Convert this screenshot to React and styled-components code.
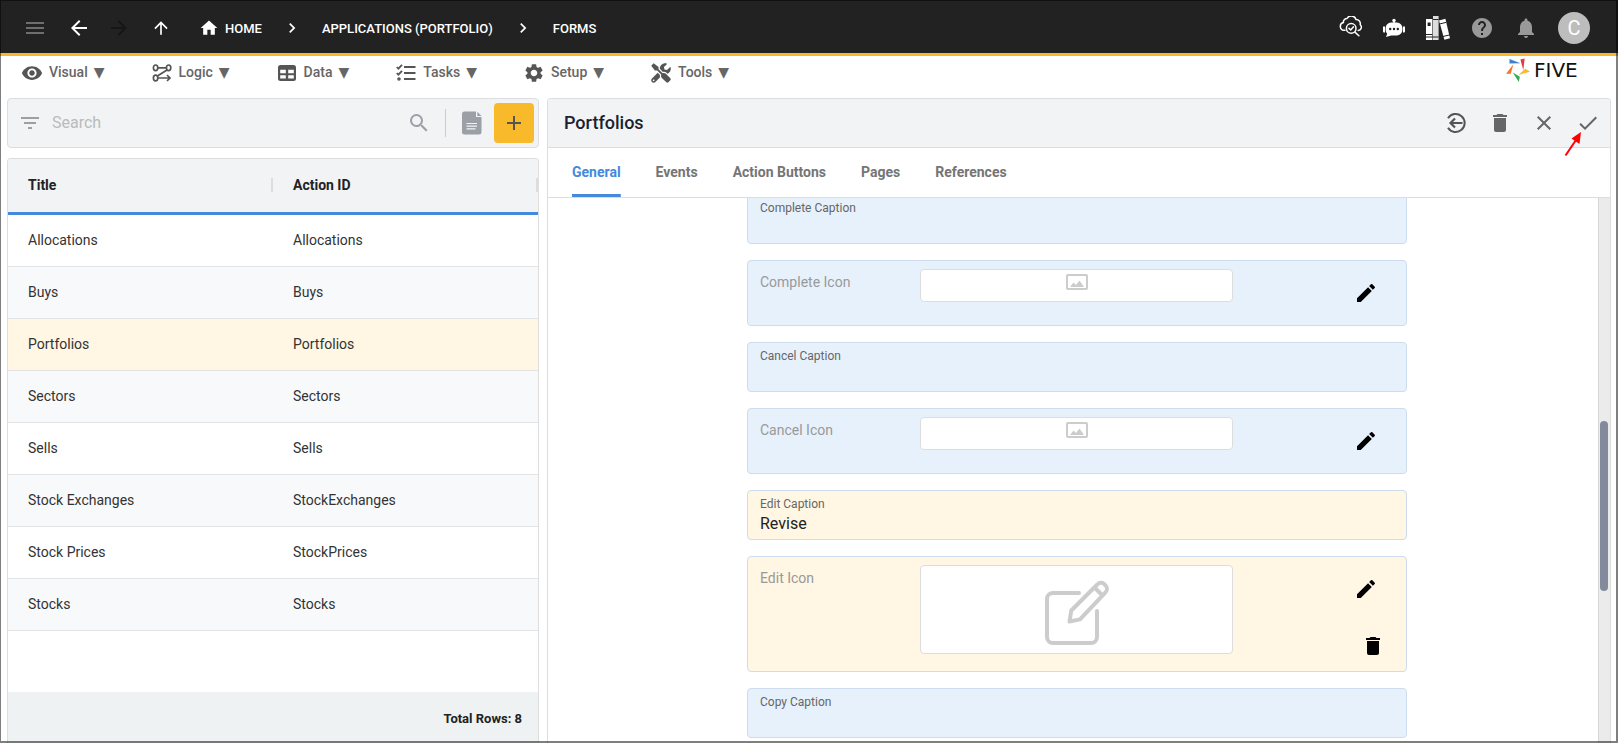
import React, { useState } from "react";
import styled, { createGlobalStyle } from "styled-components";
import {
  MdMenu,
  MdArrowBack,
  MdArrowForward,
  MdArrowUpward,
  MdHome,
  MdChevronRight,
  MdHelp,
  MdNotifications,
  MdFilterList,
  MdSearch,
  MdAdd,
  MdDelete,
  MdClose,
  MdCheck,
  MdEdit,
  MdSettings,
  MdRemoveRedEye,
} from "react-icons/md";

const GlobalStyle = createGlobalStyle`
  * {
    box-sizing: border-box;
  }
  body {
    margin: 0;
    font-family: Roboto, "Liberation Sans", sans-serif;
    font-size: 14px;
    color: #333;
    background: white;
  }
  button, input {
    font: inherit;
    color: inherit;
  }
`;

const Container = styled.div`
  position: relative;
  display: flex;
  flex-direction: column;
  height: 100vh;
  overflow: hidden;
  &::after {
    content: "";
    position: absolute;
    inset: 0;
    border: solid rgba(0, 0, 0, 0.5);
    border-width: 1px 2px 2px 1px;
    pointer-events: none;
  }
`;

const Header = styled.header`
  display: flex;
  justify-content: space-between;
  align-items: center;
  height: 56px;
  padding: 3px 22px 0 13px;
  background: #222;
  border-bottom: 3px solid #fbb62b;
  color: white;
`;

const HeaderGroup = styled.div`
  display: flex;
  align-items: center;
`;

const IconButton = styled.button`
  display: flex;
  align-items: center;
  justify-content: center;
  width: ${(props) => props.$size || 44}px;
  height: ${(props) => props.$size || 44}px;
  padding: 0;
  border: none;
  background: none;
  color: ${(props) => props.$color || "inherit"};
`;

const NavButtons = styled(HeaderGroup)`
  margin-right: 14px;
`;

const Crumbs = styled.nav`
  display: flex;
  align-items: center;
  gap: 20px;
`;

const Crumb = styled.a`
  display: flex;
  align-items: center;
  gap: 6px;
  color: white;
  font-size: 13px;
  font-weight: 500;
  text-decoration: none;
  text-transform: uppercase;
`;

const Avatar = styled.button`
  width: 32px;
  height: 32px;
  margin-left: 10px;
  margin-right: 6px;
  padding: 0;
  border: none;
  border-radius: 50%;
  background: #bdbdbd;
  color: white;
  font-size: 20px;
  line-height: 32px;
`;

const MenuBar = styled.div`
  display: flex;
  justify-content: space-between;
  align-items: flex-start;
  height: 42px;
  padding: 0 24px 0 21px;
`;

const Menu = styled.nav`
  display: flex;
  gap: 46px;
  padding-top: 6px;
`;

const MenuButton = styled.button`
  display: flex;
  align-items: center;
  gap: 6px;
  height: 22px;
  padding: 0;
  border: none;
  background: none;
  color: #666;
  font-weight: 500;
  line-height: 18px;
  svg {
    color: #555;
  }
`;

const MenuText = styled.span`
  padding-bottom: 2px;
`;

const Caret = styled.span`
  padding-bottom: 2px;
  font-family: "DejaVu Sans", sans-serif;
  font-size: 14px;
  font-weight: 400;
`;

const Logo = styled.a`
  display: flex;
  align-items: center;
  gap: 4px;
  width: 88px;
  height: 28px;
  color: #111;
  font-family: "DejaVu Sans", sans-serif;
  font-size: 20px;
  text-decoration: none;
`;

const Main = styled.main`
  display: grid;
  grid-template-columns: 1fr 2fr;
  gap: 8px;
  flex: 1;
  min-height: 0;
  padding: 0 7px;
`;

const LeftPane = styled.section`
  display: flex;
  flex-direction: column;
  gap: 10px;
  min-height: 0;
`;

const SearchBar = styled.div`
  display: flex;
  align-items: center;
  height: 50px;
  padding: 0 4px 0 10px;
  border: 1px solid #ddd;
  border-radius: 4px;
  background: #f1f3f5;
  color: #9aa0a6;
`;

const SearchInput = styled.input`
  flex: 1;
  min-width: 0;
  margin: 0 10px;
  padding: 0 0 2px;
  border: none;
  outline: none;
  background: none;
  color: #333;
  font-size: 16px;
  &::placeholder {
    color: #bbb;
  }
`;

const Divider = styled.div`
  width: 1px;
  height: 28px;
  margin: 0 6px 0 4px;
  background: #ccc;
`;

const AddButton = styled(IconButton)`
  margin-left: 2px;
  border-radius: 4px;
  background: #f8b92b;
  color: #555;
`;

const TablePanel = styled.div`
  display: flex;
  flex-direction: column;
  flex: 1;
  min-height: 0;
  border: 1px solid #ddd;
  border-bottom: none;
  border-radius: 4px 4px 0 0;
  overflow: hidden;
`;

const Table = styled.table`
  width: 100%;
  table-layout: fixed;
  border-collapse: separate;
  border-spacing: 0;
`;

const HeadCell = styled.th`
  height: 56px;
  padding: 0 0 2px 20px;
  border-bottom: 3px solid #4489dc;
  background: #f1f3f5;
  color: #222;
  font-weight: 700;
  text-align: left;
  span {
    display: block;
    border-right: 2px solid #ddd;
    line-height: 14px;
  }
`;

const Row = styled.tr`
  background: ${(props) => (props.$selected ? "#fff6e3" : "white")};
  &:nth-child(even) {
    background: #f8f9fb;
  }
`;

const Cell = styled.td`
  height: 52px;
  padding: 0 0 2px 20px;
  border-bottom: 1px solid #e1e3e5;
`;

const TableFooter = styled.div`
  margin-top: auto;
  padding: 17px 16px 14px;
  background: #eef2f3;
  color: #222;
  font-size: 13px;
  font-weight: 700;
  line-height: 20px;
  text-align: right;
`;

const RightPane = styled.section`
  display: flex;
  flex-direction: column;
  min-height: 0;
  border: 1px solid #ddd;
  border-bottom: none;
  border-radius: 4px 4px 0 0;
  overflow: hidden;
`;

const PaneHeader = styled.div`
  position: relative;
  display: flex;
  justify-content: space-between;
  align-items: center;
  height: 49px;
  flex-shrink: 0;
  padding-left: 16px;
  border-bottom: 1px solid #ddd;
  background: #f1f3f5;
  color: #666;
`;

const PaneTitle = styled.h1`
  margin: 0;
  padding-bottom: 2px;
  color: #1a2130;
  font-size: 18px;
  font-weight: 500;
`;

const Pointer = styled.svg`
  position: absolute;
  right: 28px;
  top: 32px;
  z-index: 1;
`;

const Tabs = styled.div`
  display: flex;
  gap: 35px;
  height: 50px;
  flex-shrink: 0;
  padding-left: 24px;
  border-bottom: 1px solid #ddd;
`;

const Tab = styled.button`
  padding: 0 0 2px;
  border: none;
  background: ${(props) =>
    props.$active
      ? "linear-gradient(#4489dc, #4489dc) bottom / 100% 3px no-repeat"
      : "none"};
  color: ${(props) => (props.$active ? "#4489dc" : "#757575")};
  font-weight: 700;
`;

const FormArea = styled.div`
  display: flex;
  flex: 1;
  min-height: 0;
`;

const FormScroll = styled.div`
  flex: 1;
  overflow: hidden;
  padding-left: 8px;
`;

const Form = styled.form`
  display: flex;
  flex-direction: column;
  gap: 16px;
  max-width: 660px;
  margin: -4px auto 0;
`;

const Track = styled.div`
  display: grid;
  grid-template-rows: 223fr 170fr 152fr;
  width: 12px;
  padding: 0 1px;
  border-left: 1px solid #d5d5d5;
  background: #ebebeb;
`;

const Thumb = styled.div`
  grid-row: 2;
  width: 8px;
  border-radius: 4px;
  background: #838a9b;
`;

const Field = styled.div`
  border: 1px solid #cddded;
  border-radius: 4px;
  background: ${(props) => (props.$changed ? "#fff6e3" : "#e7f1fc")};
`;

const TextField = styled(Field)`
  display: flex;
  flex-direction: column;
  height: 50px;
  padding: 5px 12px;
  label {
    color: #666;
    font-size: 12px;
    line-height: 16px;
  }
  input {
    width: 100%;
    height: 22px;
    padding: 0;
    border: none;
    outline: none;
    background: none;
    color: #222;
    font-size: 16px;
  }
`;

const ImageField = styled(Field)`
  display: grid;
  grid-template-columns: 1fr 313px 157px;
  align-items: start;
  padding: 8px 16px 8px 12px;
`;

const ImageLabel = styled.span`
  padding-top: 5px;
  color: #999;
  line-height: 16px;
`;

const Preview = styled.div`
  display: flex;
  justify-content: center;
  padding-bottom: 7px;
  border: 1px solid #ddd;
  border-radius: 4px;
  background: white;
`;

const FieldActions = styled.div`
  display: flex;
  flex-direction: column;
  align-items: flex-end;
  gap: 16px;
  color: black;
`;

const CloudIcon = () => (
  <svg width="24" height="24" viewBox="-1 0 24 24" fill="none" stroke="white" strokeWidth="1.5" strokeLinecap="round" strokeLinejoin="round">
    <path d="M6 14.300H5a3.900 3.900 0 0 1-.6-7.700A3.600 3.600 0 0 1 8 2.500a4.900 4.900 0 0 1 9 1 4.200 4.200 0 0 1 4.200 5.200 3.300 3.300 0 0 1-2 5.800" />
    <circle cx="12.200" cy="12.400" r="4.800" />
    <path d="m10 12.400 1.700 1.600 2.800-3.200M15.900 16.100l4 3.700" />
  </svg>
);

const RobotIcon = () => (
  <svg width="24" height="24" viewBox="0 0 24 24" fill="white">
    <circle cx="12" cy="4.4" r="1.7" />
    <path d="M11.3 5h1.4v2h-1.4zM1 10.5h2v6H1.9a1 1 0 0 1-.9-1zM21 10.5h2v5a1 1 0 0 1-.9 1H21z" />
    <path
      fillRule="evenodd"
      d="M9 6.5h6a5.6 5.6 0 0 1 5.4 5.6v1.8a5.6 5.6 0 0 1-5.6 5.6H9.2L4 21l1.2-3.2a5.5 5.5 0 0 1-1.6-3.9v-1.8A5.6 5.6 0 0 1 9 6.5zM8.2 11.8a1.2 1.2 0 1 0 0 2.4 1.2 1.2 0 0 0 0-2.4zm3.8 0a1.2 1.2 0 1 0 0 2.4 1.2 1.2 0 0 0 0-2.4zm3.8 0a1.2 1.2 0 1 0 0 2.4 1.2 1.2 0 0 0 0-2.4z"
    />
  </svg>
);

const BooksIcon = () => (
  <svg width="24" height="24" viewBox="0 0 24 24">
    <path fill="white" d="M0 3h6.4v21H0z" />
    <path fill="#ddd" d="M7 0h5.600v24H7z" />
    <path fill="white" d="m13 4.4 6.4-1.6L24 22.2l-5.6 1.5z" />
    <path stroke="#222" strokeWidth="1" fill="none" d="M0 18.5h6.400M0 21h12.600M7 3.500h5.600M13.500 8l6.500-1.600M17 20.500l7-1.700" />
    <path fill="#222" d="M1.600 6.500h3v3.500h-3z" />
  </svg>
);

const LogicIcon = () => (
  <svg width="22" height="22" viewBox="-1 -1 22 22" fill="none" stroke="#555" strokeWidth="1.7">
    <ellipse cx="3.600" cy="4.800" rx="2.200" ry="2.800" />
    <ellipse cx="16.600" cy="4.800" rx="2.200" ry="2.800" />
    <ellipse cx="3.600" cy="15" rx="2.200" ry="2.800" />
    <path d="M6 4.800h8.200M15 7 5.400 13M6 15h12M15 12l3 3-3 3" />
  </svg>
);

const DataIcon = () => (
  <svg width="22" height="22" viewBox="-1 -1 22 22">
    <path
      fill="#555"
      fillRule="evenodd"
      d="M3.500 2h13A2.500 2.500 0 0 1 19 4.500v11a2.500 2.500 0 0 1-2.500 2.500h-13A2.500 2.500 0 0 1 1 15.500v-11A2.500 2.500 0 0 1 3.500 2zM3.200 6.800v3.400h5.600V6.800zm8 0v3.400h5.600V6.800zm-8 5.400v3.400h5.600v-3.400zm8 0v3.400h5.600v-3.400z"
    />
  </svg>
);

const TasksIcon = () => (
  <svg width="22" height="22" viewBox="-1 -1 22 22" fill="none" stroke="#555" strokeWidth="2.200">
    <path d="M8 4h11.500M8 10h11.500M8 16h11.500" />
    <path d="m.8 4 1.600 1.700L6 1.800M.8 10l1.600 1.700L6 7.800" strokeWidth="1.800" />
    <circle cx="3" cy="16" r="1" strokeWidth="1.600" />
  </svg>
);

const ToolsIcon = () => (
  <svg width="22" height="22" viewBox="-32 -32 576 576" fill="#555">
    <path d="M501.1 395.7L384 278.600c-23.100-23.100-57.600-27.600-85.400-13.900L192 158.100V96L64 0 0 64l96 128h62.100l106.600 106.600c-13.600 27.800-9.200 62.300 13.900 85.400l117.100 117.100c14.600 14.600 38.200 14.600 52.700 0l52.700-52.700c14.500-14.600 14.500-38.200 0-52.700zM331.700 225c28.300 0 54.900 11 74.900 31l19.400 19.400c15.800-6.900 30.800-16.500 43.800-29.500 37.100-37.100 49.700-89.300 37.900-136.700-2.200-9-13.500-12.100-20.100-5.500l-74.400 74.400-67.900-11.300L334 98.900l74.400-74.400c6.600-6.600 3.400-17.900-5.700-20.200-47.400-11.700-99.600.9-136.600 37.900-28.500 28.500-41.900 66.100-41.200 103.600l82.100 82.100c8.100-1.900 16.500-2.900 24.700-2.900zm-103.900 82l-56.700-56.700L18.700 402.800c-25 25-25 65.500 0 90.500s65.500 25 90.500 0l123.600-123.600c-7.600-19.900-9.900-41.600-5-62.700zM64 472c-13.200 0-24-10.800-24-24 0-13.300 10.700-24 24-24s24 10.700 24 24c0 13.200-10.700 24-24 24z" />
  </svg>
);

const LogoIcon = () => (
  <svg width="24" height="24" viewBox="0 0 24 24">
    <path fill="#3b82d6" d="M3.500 1v4.600l11-.3z" />
    <path fill="#e23b3b" d="M18.700.4 14.400 1.600l2.900 10.500z" />
    <path fill="#f8b92b" d="m19.200 10.800 4.800 2.700-11.500 3.600z" />
    <path fill="#35a853" d="m6.800 14.500 7 4.300-1 5.200z" />
    <path fill="#f4772a" d="m7.400 6.200-2.600 9.600H0z" />
  </svg>
);

const DocIcon = () => (
  <svg width="24" height="24" viewBox="0 0 24 24">
    <path fill="#9aa0a6" d="M4.500.5h11.500V6H21.500V21a2.500 2.500 0 0 1-2.500 2.500H4.500A2.500 2.500 0 0 1 2 21V3A2.500 2.500 0 0 1 4.500.5z" />
    <path fill="#9aa0a6" d="M17.300.8 21.500 5h-4.200z" />
    <path stroke="#f1f3f5" strokeWidth="1.200" d="M6.500 12.500h10.500M6.500 15.200h10.500M6.500 17.900h9" />
  </svg>
);

const ExitIcon = () => (
  <svg width="24" height="24" viewBox="0 0 24 24" fill="none" stroke="#555" strokeWidth="2">
    <path d="M4 7.300a9 9 0 1 1 0 9.400" />
    <path d="M18.500 12H7M11 7.500 6.500 12l4.500 4.500" strokeWidth="2.200" />
  </svg>
);

const PhotoIcon = () => (
  <svg width="24" height="24" viewBox="0 0 24 24">
    <rect x="2" y="5" width="20" height="14" rx="1" fill="none" stroke="#ccc" strokeWidth="2" />
    <path fill="#ccc" d="m5 17 3.500-4.500 2.500 2.500 3.500-4.500L19 17z" />
  </svg>
);

const ComposeIcon = () => (
  <svg width="80" height="80" viewBox="0 0 80 80" fill="none" stroke="#ccc" strokeWidth="4" strokeLinecap="round" strokeLinejoin="round">
    <path d="M42 27H16a6 6 0 0 0-6 6v38a6 6 0 0 0 6 6h38a6 6 0 0 0 6-6V45" />
    <path d="m32.500 55.500 1.800-11 26-26a5 5 0 0 1 7.400 0l.8.800a5 5 0 0 1 0 7L43 53.400zM57.500 21.500l7.500 7.500" />
  </svg>
);

const menus = [
  { name: "Visual", icon: <MdRemoveRedEye size={22} /> },
  { name: "Logic", icon: <LogicIcon /> },
  { name: "Data", icon: <DataIcon /> },
  { name: "Tasks", icon: <TasksIcon /> },
  { name: "Setup", icon: <MdSettings size={22} /> },
  { name: "Tools", icon: <ToolsIcon /> },
];

const rows = [
  ["Allocations", "Allocations"],
  ["Buys", "Buys"],
  ["Portfolios", "Portfolios"],
  ["Sectors", "Sectors"],
  ["Sells", "Sells"],
  ["Stock Exchanges", "StockExchanges"],
  ["Stock Prices", "StockPrices"],
  ["Stocks", "Stocks"],
];

const tabs = ["General", "Events", "Action Buttons", "Pages", "References"];

const CaptionField = ({ id, label, value = "" }) => {
  const [text, setText] = useState(value);
  return (
    <TextField $changed={text !== ""}>
      <label htmlFor={id}>{label}</label>
      <input id={id} value={text} onChange={(e) => setText(e.target.value)} />
    </TextField>
  );
};

const IconField = ({ label, image }) => (
  <ImageField $changed={!!image}>
    <ImageLabel>{label}</ImageLabel>
    <Preview>{image || <PhotoIcon />}</Preview>
    <FieldActions>
      <IconButton type="button" $size={48} aria-label={"Edit " + label}>
        <MdEdit size={24} />
      </IconButton>
      {image && (
        <IconButton type="button" $size={34} aria-label={"Delete " + label}>
          <MdDelete size={24} />
        </IconButton>
      )}
    </FieldActions>
  </ImageField>
);

function App() {
  const [search, setSearch] = useState("");
  const [selected, setSelected] = useState("Portfolios");
  const [activeTab, setActiveTab] = useState("General");

  return (
    <Container>
      <GlobalStyle />
      <Header>
        <HeaderGroup>
          <NavButtons>
            <IconButton $color="#6e6e6e" aria-label="Menu">
              <MdMenu size={24} />
            </IconButton>
            <IconButton aria-label="Back">
              <MdArrowBack size={24} />
            </IconButton>
            <IconButton $size={36} $color="#161616" aria-label="Forward">
              <MdArrowForward size={24} />
            </IconButton>
            <IconButton $size={48} aria-label="Up">
              <MdArrowUpward size={20} />
            </IconButton>
          </NavButtons>
          <Crumbs>
            <Crumb href="#home">
              <MdHome size={20} />
              Home
            </Crumb>
            <MdChevronRight size={20} />
            <Crumb href="#applications">Applications (Portfolio)</Crumb>
            <MdChevronRight size={20} />
            <Crumb href="#forms">Forms</Crumb>
          </Crumbs>
        </HeaderGroup>
        <HeaderGroup>
          <IconButton aria-label="Inspector">
            <CloudIcon />
          </IconButton>
          <IconButton aria-label="Assistant">
            <RobotIcon />
          </IconButton>
          <IconButton aria-label="Library">
            <BooksIcon />
          </IconButton>
          <IconButton $color="#999" aria-label="Help">
            <MdHelp size={24} />
          </IconButton>
          <IconButton $color="#999" aria-label="Notifications">
            <MdNotifications size={24} />
          </IconButton>
          <Avatar>C</Avatar>
        </HeaderGroup>
      </Header>

      <MenuBar>
        <Menu>
          {menus.map((menu) => (
            <MenuButton key={menu.name}>
              {menu.icon}
              <MenuText>{menu.name}</MenuText>
              <Caret>▼</Caret>
            </MenuButton>
          ))}
        </Menu>
        <Logo href="#five">
          <LogoIcon />
          FIVE
        </Logo>
      </MenuBar>

      <Main>
        <LeftPane>
          <SearchBar>
            <MdFilterList size={24} />
            <SearchInput
              placeholder="Search"
              aria-label="Search"
              value={search}
              onChange={(e) => setSearch(e.target.value)}
            />
            <IconButton aria-label="Run search">
              <MdSearch size={24} />
            </IconButton>
            <Divider />
            <IconButton $size={40} aria-label="Report">
              <DocIcon />
            </IconButton>
            <AddButton $size={40} aria-label="Add">
              <MdAdd size={24} />
            </AddButton>
          </SearchBar>
          <TablePanel>
            <Table>
              <thead>
                <tr>
                  <HeadCell>
                    <span>Title</span>
                  </HeadCell>
                  <HeadCell>
                    <span>Action ID</span>
                  </HeadCell>
                </tr>
              </thead>
              <tbody>
                {rows.map(([title, actionId]) => (
                  <Row
                    key={title}
                    $selected={title === selected}
                    onClick={() => setSelected(title)}
                  >
                    <Cell>{title}</Cell>
                    <Cell>{actionId}</Cell>
                  </Row>
                ))}
              </tbody>
            </Table>
            <TableFooter>Total Rows: {rows.length}</TableFooter>
          </TablePanel>
        </LeftPane>

        <RightPane>
          <PaneHeader>
            <PaneTitle>Portfolios</PaneTitle>
            <HeaderGroup>
              <IconButton aria-label="Exit">
                <ExitIcon />
              </IconButton>
              <IconButton aria-label="Delete">
                <MdDelete size={24} />
              </IconButton>
              <IconButton aria-label="Cancel">
                <MdClose size={24} />
              </IconButton>
              <IconButton aria-label="Save">
                <MdCheck size={24} />
              </IconButton>
            </HeaderGroup>
            <Pointer width="18" height="26" viewBox="0 0 18 26">
              <path d="M1.500 24.500 12 9" stroke="red" strokeWidth="2" />
              <path fill="red" d="M17 1 15.500 13 7.500 7.500z" />
            </Pointer>
          </PaneHeader>
          <Tabs>
            {tabs.map((tab) => (
              <Tab
                key={tab}
                $active={tab === activeTab}
                onClick={() => setActiveTab(tab)}
              >
                {tab}
              </Tab>
            ))}
          </Tabs>
          <FormArea>
            <FormScroll>
              <Form>
                <CaptionField id="complete" label="Complete Caption" />
                <IconField label="Complete Icon" />
                <CaptionField id="cancel" label="Cancel Caption" />
                <IconField label="Cancel Icon" />
                <CaptionField id="edit" label="Edit Caption" value="Revise" />
                <IconField label="Edit Icon" image={<ComposeIcon />} />
                <CaptionField id="copy" label="Copy Caption" />
              </Form>
            </FormScroll>
            <Track>
              <Thumb />
            </Track>
          </FormArea>
        </RightPane>
      </Main>
    </Container>
  );
}

export default App;
